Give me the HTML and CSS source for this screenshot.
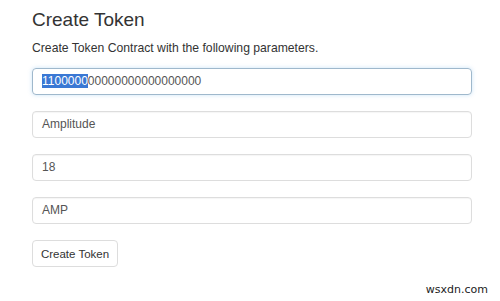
FILE: index.html
```html
<!DOCTYPE html>
<html>
<head>
<meta charset="utf-8">
<link rel="stylesheet" href="styles.css">
</head>
<body>
<div class="page">
  <h1 class="title">Create Token</h1>
  <p class="lead">Create Token Contract with the following parameters.</p>
  <div class="form">
    <div class="field focus"><span class="sel">1100000</span>00000000000000000</div>
    <div class="field">Amplitude</div>
    <div class="field">18</div>
    <div class="field">AMP</div>
    <div class="actions"><button class="btn">Create Token</button></div>
  </div>
</div>
<div class="mark">wsxdn.com</div>
</body>
</html>
```

FILE: styles.css
```css
html, body {
  margin: 0;
  padding: 0;
  background: #fff;
}
body {
  width: 500px;
  height: 301px;
  overflow: hidden;
  font-family: "Liberation Sans", Arial, sans-serif;
  color: #333;
  position: relative;
}
.page {
  padding: 8px 28px 0 32px;
}
.title {
  margin: 0;
  font-size: 19px;
  font-weight: normal;
  line-height: 24px;
  color: #333;
}
.lead {
  margin: 8px 0 0;
  font-size: 12.2px;
  line-height: 16px;
  color: #333;
}
.form {
  margin-top: 12px;
  display: flex;
  flex-direction: column;
  gap: 16px;
}
.field {
  box-sizing: border-box;
  height: 27px;
  border: 1px solid #ddd;
  border-radius: 4px;
  padding: 0 9px;
  font-size: 12px;
  line-height: 25px;
  color: #555;
  box-shadow: inset 0 1px 1px rgba(0,0,0,0.04);
  white-space: nowrap;
  overflow: hidden;
}
.field.focus {
  border-color: #9fb8cc;
  box-shadow: 0 0 4px rgba(102,175,233,0.35);
}
.sel {
  background: #3a78d4;
  color: #fff;
}
.actions {
  display: flex;
}
.btn {
  box-sizing: border-box;
  height: 27px;
  width: 86px;
  padding: 0;
  border: 1px solid #ddd;
  border-radius: 4px;
  background: #fff;
  font-family: "Liberation Sans", Arial, sans-serif;
  font-size: 11.5px;
  color: #333;
}
.mark {
  position: absolute;
  right: 12px;
  bottom: 5px;
  font-family: "DejaVu Sans", sans-serif;
  font-size: 11px;
  color: #222;
}
```
